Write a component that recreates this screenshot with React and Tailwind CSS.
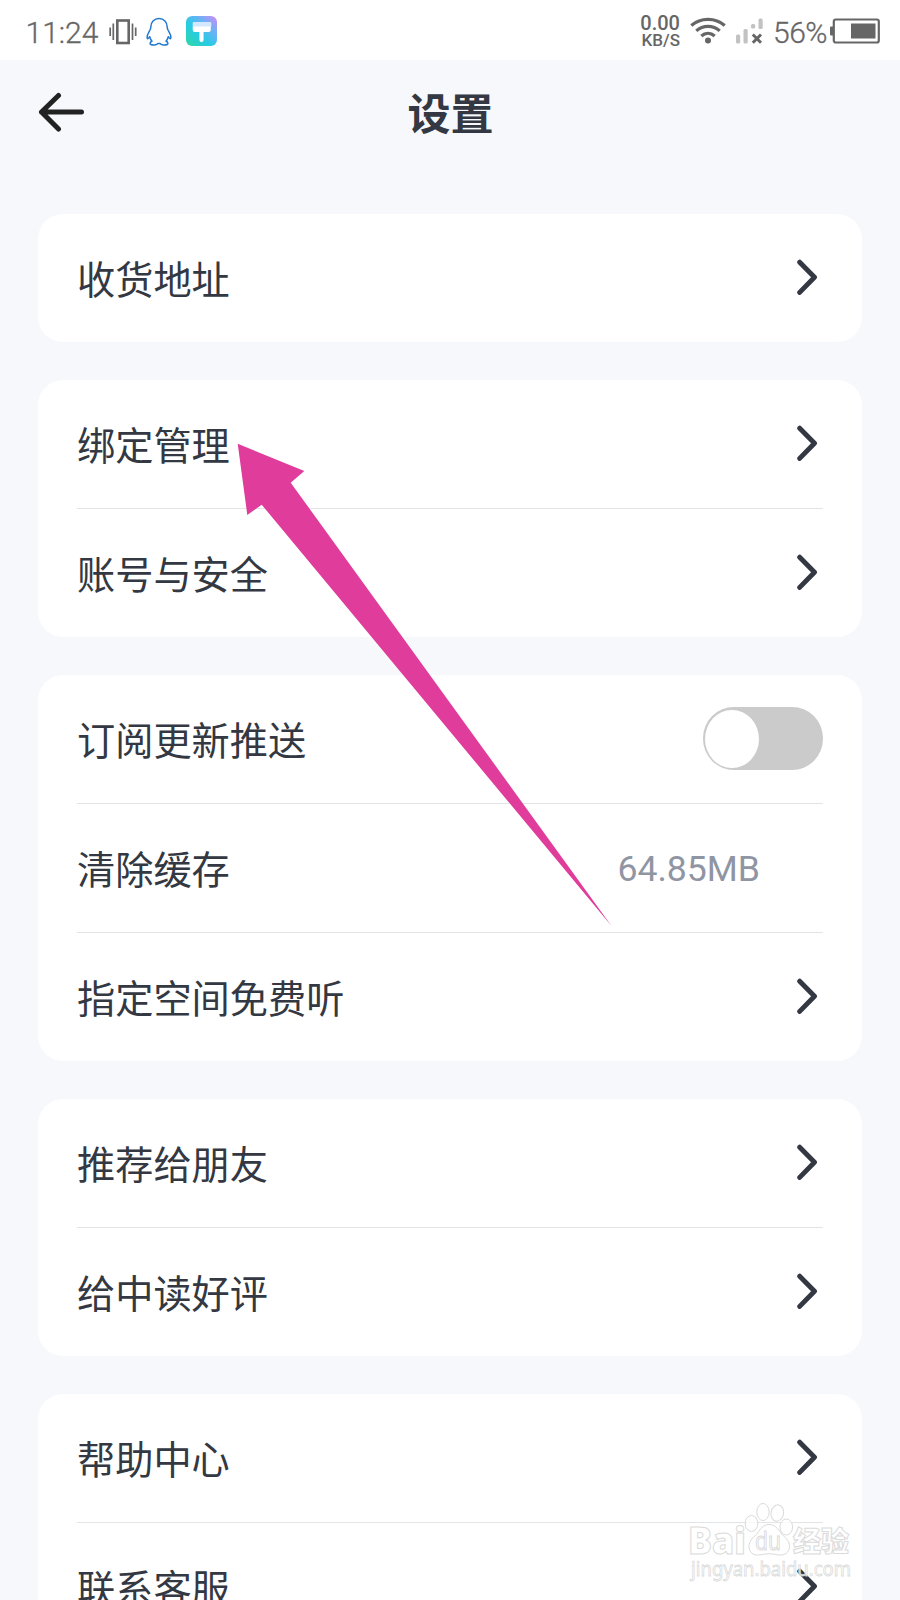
import React from 'react';

const groups = [
  [{ label: '收货地址', type: 'link' }],
  [
    { label: '绑定管理', type: 'link' },
    { label: '账号与安全', type: 'link' },
  ],
  [
    { label: '订阅更新推送', type: 'toggle' },
    { label: '清除缓存', type: 'value', value: '64.85MB' },
    { label: '指定空间免费听', type: 'link' },
  ],
  [
    { label: '推荐给朋友', type: 'link' },
    { label: '给中读好评', type: 'link' },
  ],
  [
    { label: '帮助中心', type: 'link' },
    { label: '联系客服', type: 'link' },
  ],
];

function StatusBar() {
  return (
    <div className="flex h-[60px] shrink-0 items-center justify-between bg-white pl-[25.5px] pr-5 font-['Roboto',sans-serif] text-[#666]">
      <div className="flex items-center">
        <span className="w-[83px] pt-1.5 text-[30px] leading-none font-light whitespace-nowrap [-webkit-text-stroke:0.3px_#666]">11:24</span>
        <svg width="28" height="26" viewBox="0 0 28 26" className="mt-[3px]" fill="none" stroke="#666">
          <rect x="8.300" y="1.500" width="11.400" height="22.500" strokeWidth="2.600" />
          <path d="M4.300 4.500v16.500M23.500 4.500v16.500" strokeWidth="1.700" />
          <path d="M1.200 8.500v8.500M26.700 8.500v8.500" strokeWidth="1.700" />
        </svg>
        <svg width="26" height="30" viewBox="0 0 26 30" className="ml-[9.5px] mt-[3px]" fill="none" stroke="#2379d0" strokeWidth="1.500" strokeLinejoin="round">
          <path d="M13 1.600C8 1.600 4.800 5.300 4.800 10c0 1.300-.5 2-.8 3C2.500 15.700 1 18 1.100 20.500c.1 1.700 1 1.700 2.600-.8.500 2 1.200 3.200 2.300 4.500-2 .7-2.500 2.700-1.200 3.300 2.200 1 6 .5 7.200-1h2c1.200 1.500 5 2 7.200 1 1.300-.6.8-2.600-1.200-3.300 1.100-1.300 1.800-2.500 2.300-4.500 1.600 2.500 2.500 2.500 2.600.8.100-2.500-1.400-4.800-2.900-7.500-.3-1-.8-1.700-.8-3C21.200 5.300 18 1.600 13 1.600Z" />
        </svg>
        <svg width="31" height="30" viewBox="0 0 30 30" preserveAspectRatio="none" className="ml-[14px] mt-0.5">
          <defs>
            <linearGradient id="brush" x1="0" y1="1" x2="1" y2="0">
              <stop offset="0" stopColor="#2fd8a4" />
              <stop offset=".4" stopColor="#27cbe4" />
              <stop offset=".7" stopColor="#6fb0f6" />
              <stop offset="1" stopColor="#d488f5" />
            </linearGradient>
          </defs>
          <rect width="30" height="30" rx="6" fill="url(#brush)" />
          <rect x="6.500" y="6" width="18" height="5" rx="1" fill="#d3e8ff" />
          <path d="M6.500 10.500h17.500v3.500q0 2-2 2h-5v8a2 2 0 0 1-4 0v-8h-4.500q-2 0-2-2z" fill="#fff" />
        </svg>
      </div>
      <div className="flex items-center">
        <div className="mr-[10px] flex w-[41px] flex-col items-end pt-px">
          <span className="text-[20px] leading-[18px] font-medium">0.00</span>
          <span className="text-[17px] leading-[16px] font-medium">KB/S</span>
        </div>
        <svg width="36" height="28" viewBox="0 0 36 28" className="mt-0.5" fill="none" stroke="#666" strokeWidth="3.200">
          <path d="M1.300 8.500C10.500.300 25.500.300 34.700 8.500" />
          <path d="M6.300 13.900c6.600-6 16.800-6 23.400 0" />
          <path d="M11.300 19c4-3.600 9.400-3.600 13.400 0" />
          <circle cx="18" cy="23.500" r="3" fill="#666" stroke="none" />
        </svg>
        <svg width="28" height="28" viewBox="0 0 28 28" className="mt-0.5 ml-[10px]">
          <g fill="#c2c2c2">
            <rect x="0" y="17.500" width="4.200" height="9" rx="1.500" />
            <rect x="7.500" y="12" width="4.200" height="14.500" rx="1.500" />
            <rect x="15" y="7" width="4.200" height="4.500" rx="1.500" />
            <rect x="22.500" y="1.500" width="4.200" height="10.500" rx="1.500" />
          </g>
          <path d="M16.800 17.500l8.200 8.200M25 17.500l-8.200 8.200" stroke="#666" strokeWidth="3" />
        </svg>
        <span className="ml-[9px] w-[57px] pt-1.5 text-[30px] leading-none font-light tracking-[-0.5px] whitespace-nowrap [-webkit-text-stroke:0.3px_#666]">56%</span>
        <svg width="50" height="26" viewBox="0 0 50 26" className="mt-0.5">
          <rect x="0" y="8.500" width="4" height="9" rx="1" fill="#666" />
          <rect x="3.800" y="1.500" width="45" height="23" rx="2" fill="none" stroke="#666" strokeWidth="2.200" />
          <rect x="21" y="5.500" width="24.500" height="15" fill="#666" />
        </svg>
      </div>
    </div>
  );
}

function Chevron() {
  return (
    <svg width="22" height="38" viewBox="0 0 22 38" className="mr-[5px]" fill="none" stroke="#333842" strokeWidth="4.900" strokeLinecap="round" strokeLinejoin="round">
      <path d="M3.700 3.200L18.500 18.300L3.700 33.400" />
    </svg>
  );
}

function Toggle() {
  return (
    <button className="mb-px flex h-[63px] w-[120px] items-center rounded-[31px] bg-[#cbcbcb] pl-[2.500px]">
      <span className="h-[58px] w-[53.500px] rounded-[50%] bg-white" />
    </button>
  );
}

function Row({ item }) {
  return (
    <div className="flex h-32 items-center justify-between">
      <span className="pl-[0.5px] text-[38.2px] leading-none whitespace-nowrap">{item.label}</span>
      {item.type === 'link' && <Chevron />}
      {item.type === 'toggle' && <Toggle />}
      {item.type === 'value' && (
        <span className="mr-[62.5px] pt-[3px] font-['Roboto',sans-serif] text-[35.6px] leading-none text-[#9095a3]">{item.value}</span>
      )}
    </div>
  );
}

function Watermark() {
  return (
    <svg width="176" height="92" viewBox="684 1498 176 92" className="absolute top-[1498px] left-[684px]" fill="#fff" fillOpacity=".75" stroke="#dadada" strokeWidth="1">
      <ellipse cx="751.500" cy="1523.500" rx="6.300" ry="8" />
      <ellipse cx="763" cy="1512" rx="6.200" ry="8.500" />
      <ellipse cx="777.300" cy="1513" rx="6.300" ry="8.200" transform="rotate(10 777.3 1513)" />
      <ellipse cx="786.300" cy="1527" rx="6.300" ry="8" />
      <path d="M769 1524.500c-6 0-8.500 4.500-11.500 8.500-3.500 4.500-8.500 7-8.500 13.500 0 6 4.500 9 9.500 8.500 4-.4 6.500-1.200 10.500-1.200s6.500.8 10.500 1.200c5 .5 10-2.500 10-8.500 0-6.500-5-9-8.500-13.500-3-4-6-8.500-12-8.500Z" />
      <text x="688" y="1553.500" fontSize="37" fontWeight="800" fontFamily="'Open Sans', sans-serif" textLength="58" lengthAdjust="spacingAndGlyphs">Bai</text>
      <text x="755" y="1550" fontSize="25" fontWeight="500" fontFamily="'Open Sans', sans-serif" textLength="26" lengthAdjust="spacingAndGlyphs">du</text>
      <text x="793" y="1551.500" fontSize="28" fontWeight="900" fontFamily="'Noto Sans CJK SC', sans-serif" textLength="56">经验</text>
      <text x="691" y="1576" fontSize="20" fontFamily="'Noto Sans', sans-serif" textLength="160" lengthAdjust="spacingAndGlyphs" strokeWidth=".8">jingyan.baidu.com</text>
    </svg>
  );
}

export default function App() {
  return (
    <div className="relative flex h-[1600px] w-[900px] flex-col overflow-hidden bg-[#f6f8fc] font-['Noto_Sans_CJK_SC',sans-serif] text-[#333842]">
      <StatusBar />

      <header className="grid h-[103px] shrink-0 grid-cols-[1fr_auto_1fr] items-center px-[38px]">
        <svg width="48" height="42" viewBox="0 0 48 42" fill="none" stroke="#222" strokeWidth="5" strokeLinecap="round" strokeLinejoin="round">
          <path d="M20.500 4.500L3.500 21L20.500 38M3.500 21H43.500" />
        </svg>
        <h1 className="pl-px text-[43px] leading-none font-bold">设置</h1>
      </header>

      <main className="flex flex-col gap-[38px] px-[38px] pt-[51px]">
        {groups.map((items, idx) => (
          <section key={idx} className="rounded-[25px] bg-white pr-[39.500px] pl-[38.500px]">
            {items.map((item, i) => (
              <React.Fragment key={item.label}>
                {i > 0 && <div className="h-px bg-[#e1e5e8]" />}
                <Row item={item} />
              </React.Fragment>
            ))}
          </section>
        ))}
      </main>

      {/* pointer to the binding entry */}
      <svg width="390" height="500" viewBox="230 435 390 500" className="absolute top-[435px] left-[230px]">
        <path d="M237.700 443.700L304.300 471L290.700 482.700L611.500 926L261.700 504.700L247.300 515Z" fill="#e03c9c" />
      </svg>

      <Watermark />
    </div>
  );
}
